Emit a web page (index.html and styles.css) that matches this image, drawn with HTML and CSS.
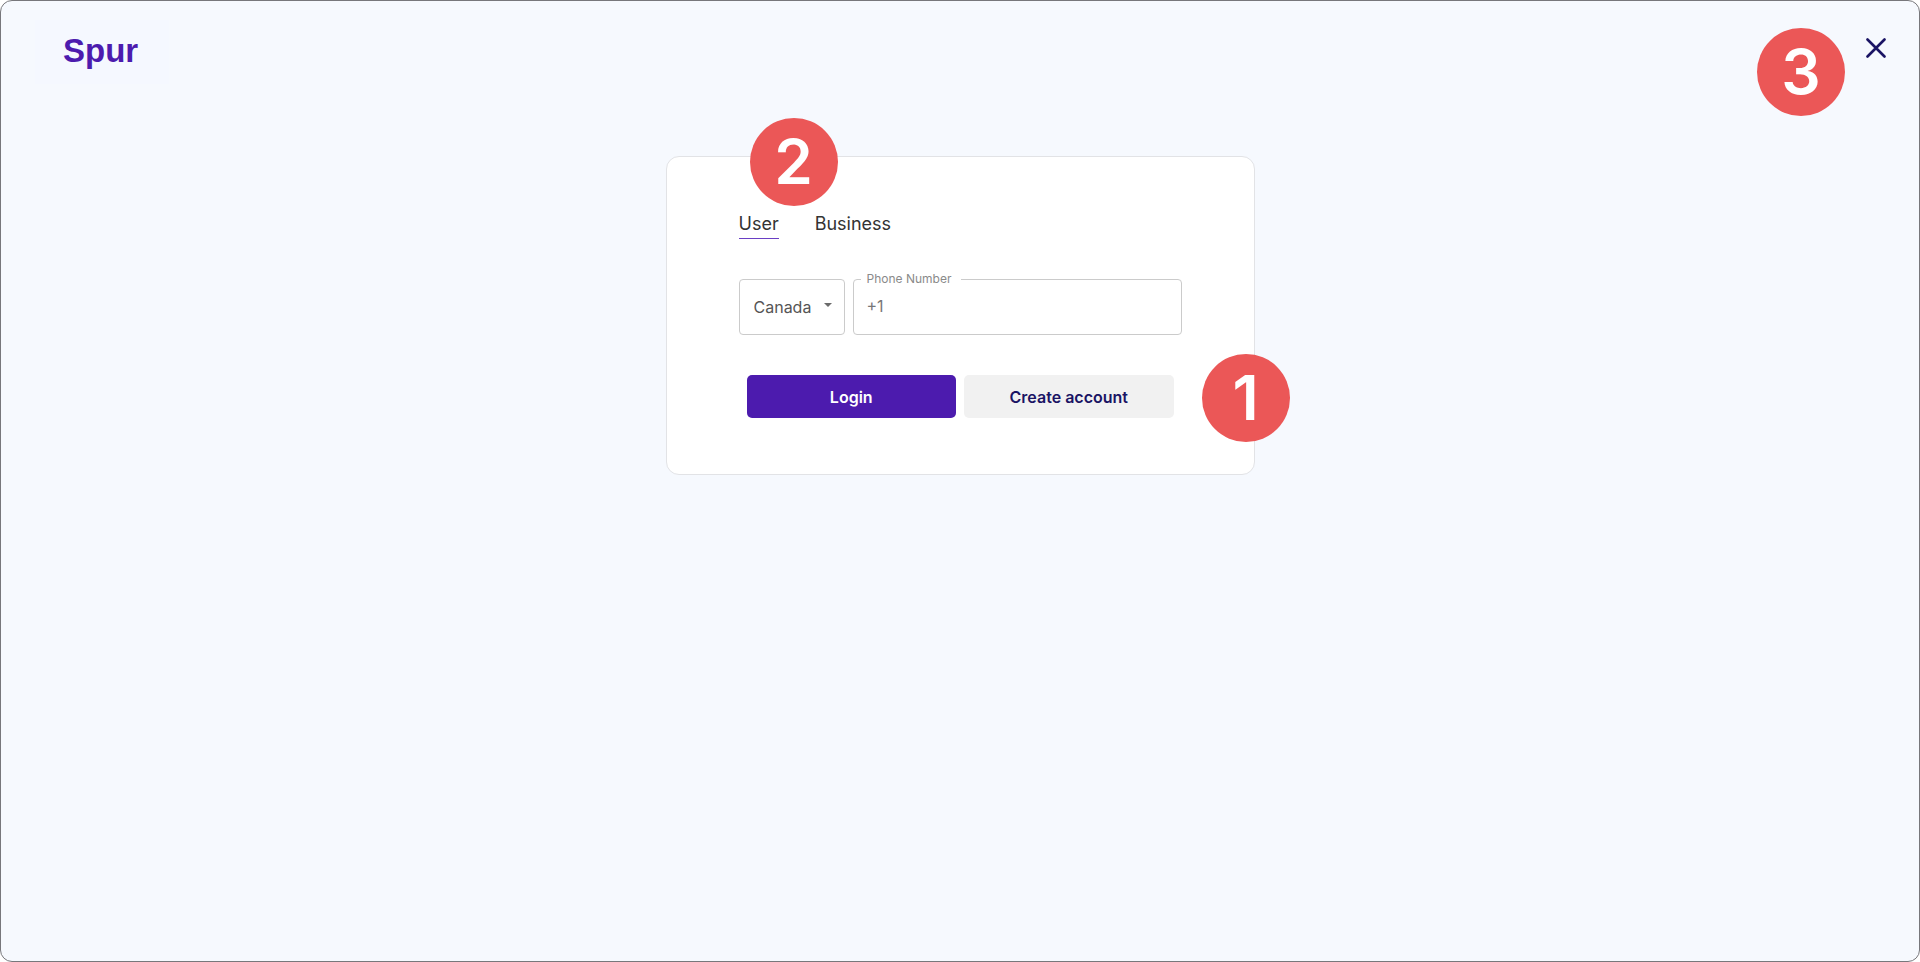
FILE: index.html
```html
<!DOCTYPE html>
<html lang="en">
<head>
<meta charset="utf-8">
<meta name="viewport" content="width=device-width, initial-scale=1">
<title>Spur - Login</title>
<link rel="stylesheet" href="styles.css">
</head>

<body>
<div class="page">
    <header class="header">
        <a class="logo" href="#">Spur</a>
        <div class="close-wrap">
            <button class="close" type="button" aria-label="Close">
                <svg width="20" height="20" viewBox="0 0 20 20"><path d="M1.5 1.5 18.5 18.5M18.5 1.5 1.5 18.5" fill="none" stroke="#1a1464" stroke-width="2.6" stroke-linecap="round"/></svg>
            </button>
            <span class="badge badge-close">3</span>
        </div>
    </header>

    <main class="card">
        <nav class="tabs">
            <a class="tab active" href="#user">User</a>
            <a class="tab" href="#business">Business</a>
        </nav>

        <form>
            <div class="fields">
                <div class="country">
                    <select id="country" aria-label="Country">
                        <option>Canada</option>
                    </select>
                    <svg class="arrow" width="8" height="4" viewBox="0 0 8 4"><path d="M0 0h8L4 4z" fill="#6b6b6b"/></svg>
                </div>
                <fieldset class="phone">
                    <legend><label for="phone">Phone Number</label></legend>
                    <input id="phone" type="tel" value="+1">
                </fieldset>
            </div>
            <div class="buttons">
                <button class="btn primary" type="submit">Login</button>
                <button class="btn" type="button">Create account</button>
            </div>
        </form>

        <span class="badge badge-create">1</span>
        <span class="badge badge-tabs">2</span>
    </main>
</div>
</body>
</html>
```

FILE: styles.css
```css
* {box-sizing: border-box;}
body {margin: 0; background: #fff; font-family: Inter, "Liberation Sans", sans-serif;}
button, input, select {font-family: inherit; margin: 0;}

.page {min-height: 100vh; border: 1px solid #77777b; border-radius: 12px; background: #f6f9fe;}

.header {display: flex; justify-content: space-between; align-items: flex-start; padding: 19px 24px 0 34px;}
.logo {padding: 11px 31px 13px 28px; background: #f5f8ff; color: #4c1bae; font-family: "Liberation Sans", Arial, sans-serif; font-size: 33px; line-height: 40px; font-weight: 700; text-decoration: none;}
.close-wrap {position: relative;}
.close {display: block; padding: 8px 9px; border: 0; background: none; margin-top: 10px; cursor: pointer;}
.close svg {display: block;}

/* login card */
.card {position: relative; width: 589px; max-width: 100%; margin: 72px auto 0; padding: 55px 72px 56px; background: #fff; border: 1px solid #e2e3e6; border-radius: 13px;}
.tabs {display: flex; gap: 36px;}
.tab {padding-bottom: 2px; border-bottom: 1px solid transparent; color: #333; font-size: 18px; line-height: 24px; text-decoration: none;}
.tab.active {border-color: #6a3fc4;}

.fields {display: flex; align-items: flex-end; gap: 8px; margin-top: 32px;}
.country {position: relative; flex: none; width: 106px;}
.country select {appearance: none; display: block; width: 100%; height: 56px; padding: 0 14px; border: 1px solid #cbcbcb; border-radius: 4px; background: #fff; color: #555; font-size: 16px;}
.arrow {position: absolute; right: 13px; top: 24px;}
.phone {flex: 1; min-width: 0; margin: 0; padding: 0 13px; border: 1px solid #cbcbcb; border-radius: 4px;}
.phone legend {margin-left: -6px; padding: 0 10px 0 6px; color: #8a8a8a; font-size: 12px; line-height: 16px;}
.phone input {display: block; width: 100%; height: 47px; padding: 0 0 9px; border: 0; outline: 0; background: none; color: #777; font-size: 16px;}

.buttons {display: flex; gap: 8px; padding: 0 8px; margin-top: 40px;}
.btn {flex: 1; height: 43px; border: 0; border-radius: 5px; background: #f1f1f1; color: #1a1464; font-size: 16px; font-weight: 600; cursor: pointer;}
.btn.primary {background: #4c1bae; color: #fff;}

/* numbered markers */
.badge {position: absolute; width: 88px; border-radius: 50%; background: #eb5757; color: #fff; font-size: 62px; line-height: 88px; font-weight: 600; text-align: center;}
.badge-close {top: 8px; right: 50px;}
.badge-create {top: 197px; right: -36px;}
.badge-tabs {top: -39px; left: 83px;}
```
